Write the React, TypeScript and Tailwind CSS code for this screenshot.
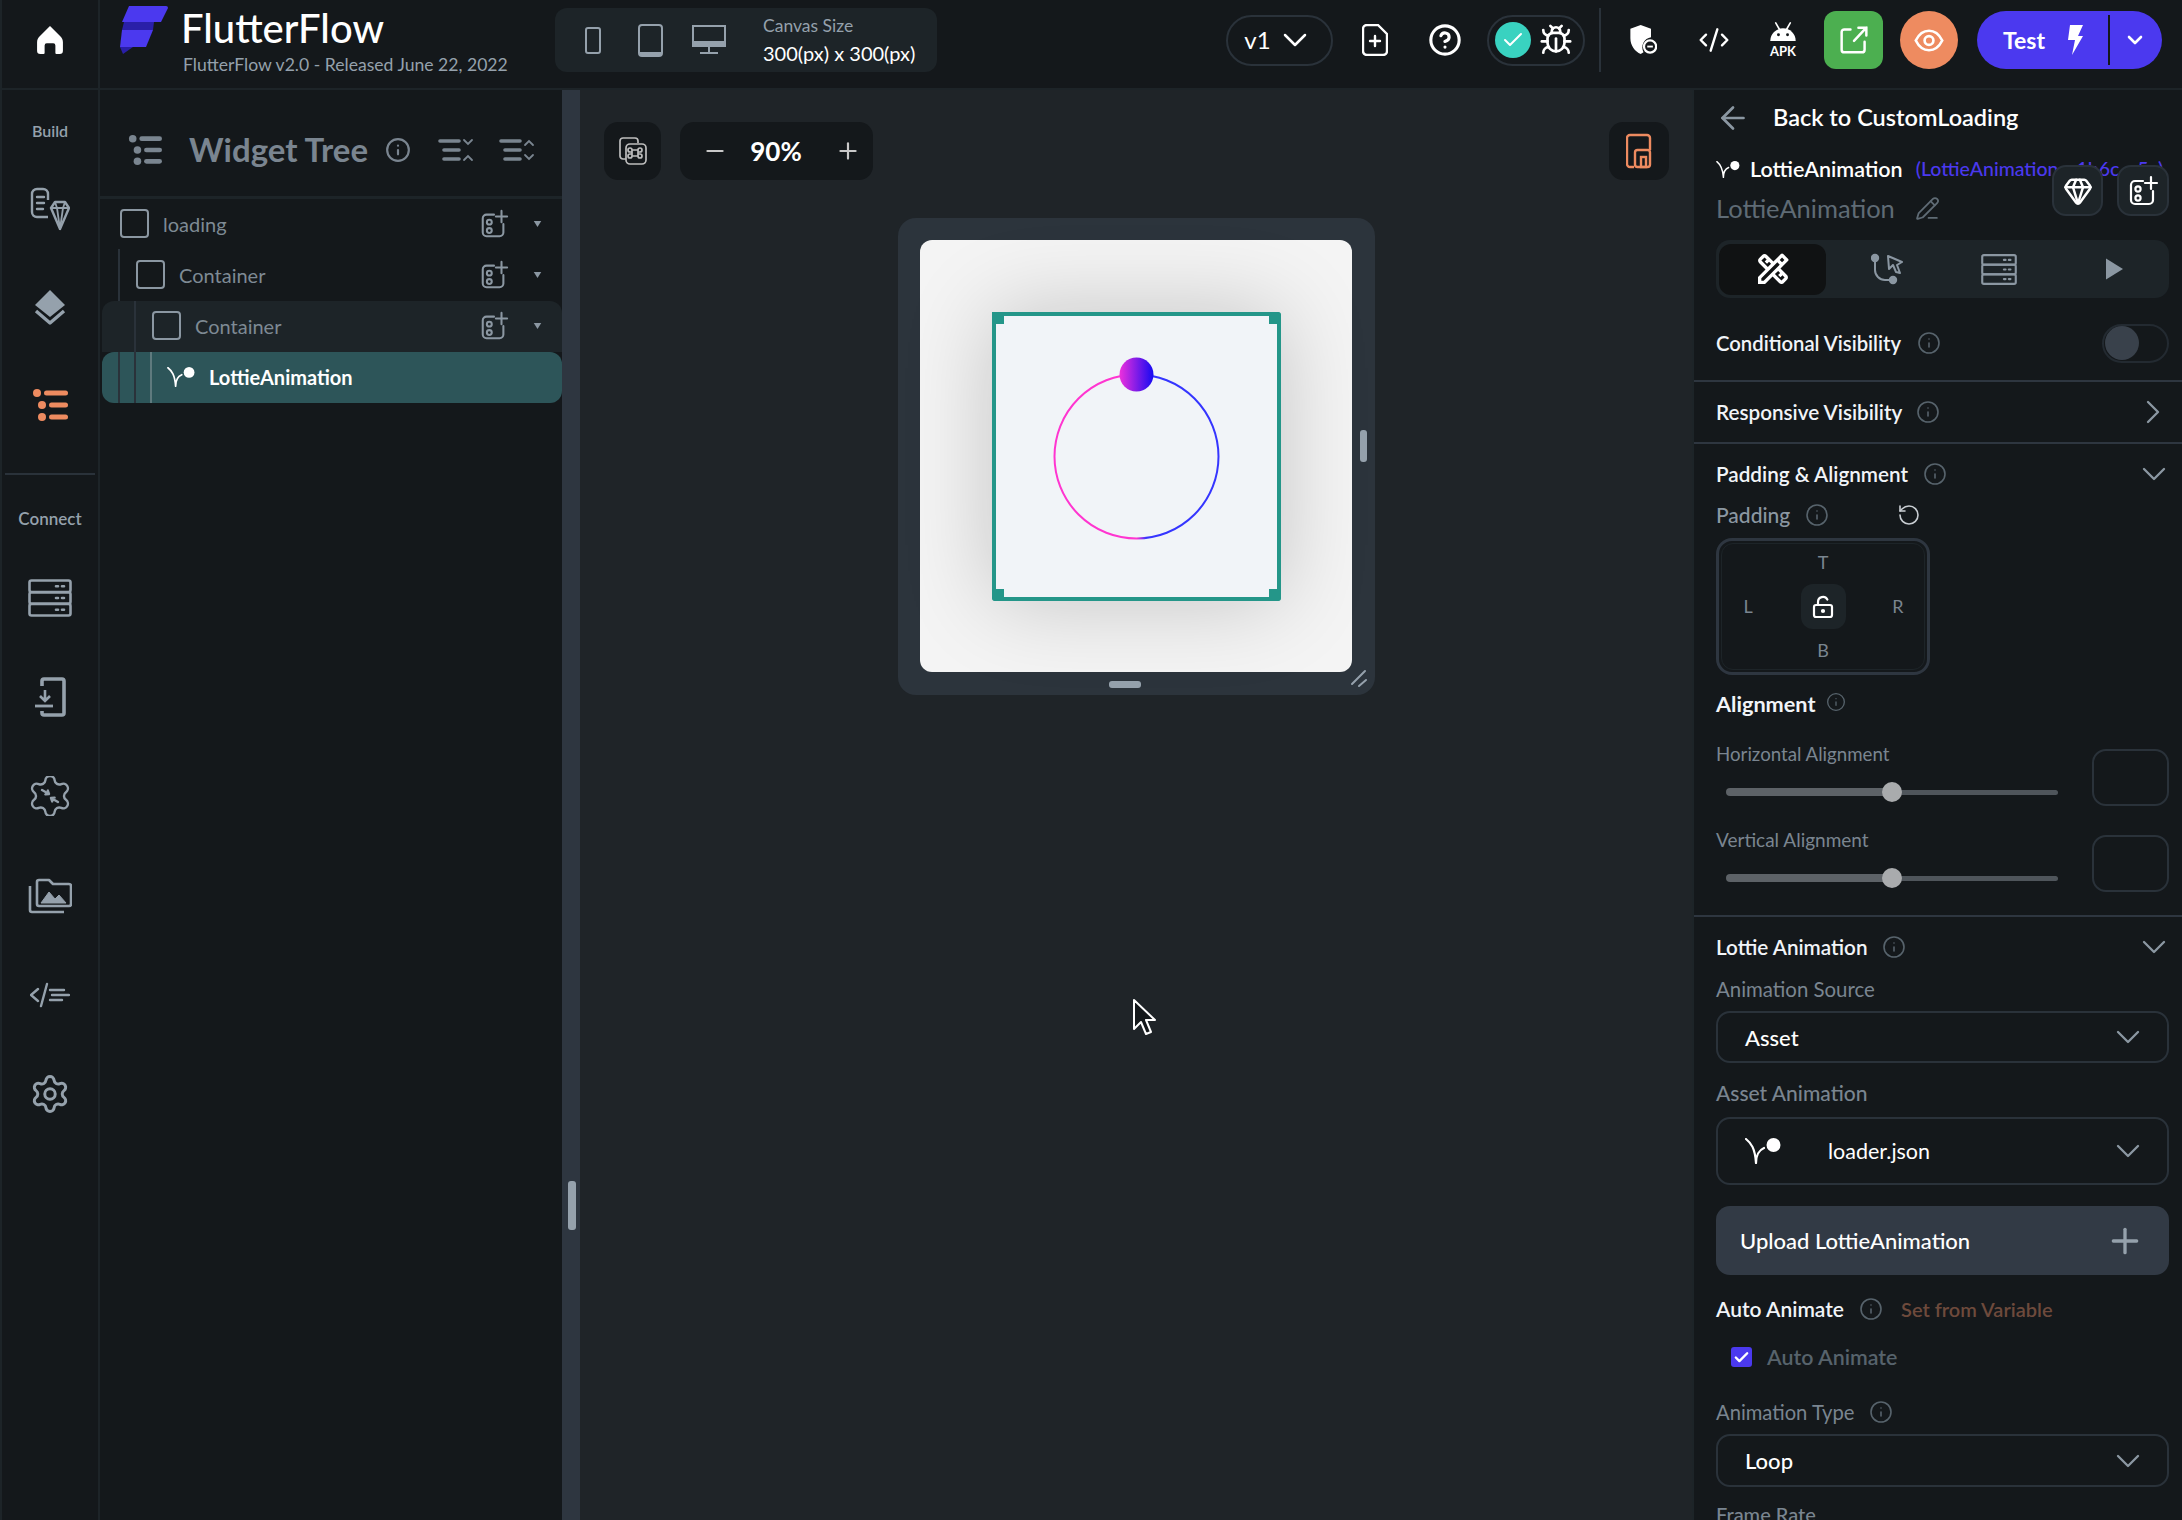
import { ChevronDown, ChevronRight, CircleHelp, Bug, Check, CodeXml, Info, LockKeyholeOpen, PencilLine, Plus, Minus, RotateCcw, ArrowLeft, Gem, Settings } from 'lucide-react';
import { MdOutlineDesignServices } from 'react-icons/md';

const FONT = "font-['Lato','Liberation_Sans',sans-serif]";

function LottieIcon({ className }: { className?: string }) {
    return (
        <svg viewBox="0 0 36 26" className={className} fill="none">
            <path d="M1 1c5 4 9 9 10 24M11 25c0-7 3-13 8-15" stroke="currentColor" strokeWidth="2.2" strokeLinecap="round" />
            <circle cx="28.5" cy="7" r="7" fill="currentColor" />
        </svg>
    );
}

function AddWidgetIcon({ className }: { className?: string }) {
    return (
        <svg viewBox="0 0 32 32" className={className} fill="none" stroke="currentColor" strokeWidth="2.2" strokeLinecap="round">
            <path d="M16 6H8a4 4 0 0 0-4 4v15a4 4 0 0 0 4 4h14a4 4 0 0 0 4-4v-9" />
            <circle cx="11" cy="14" r="2.6" />
            <circle cx="11" cy="23" r="2.6" />
            <path d="M24 2v12M18 8h12" />
        </svg>
    );
}

function DatabaseIcon({ className }: { className?: string }) {
    return (
        <svg viewBox="0 0 44 38" className={className} fill="none" stroke="currentColor" strokeWidth="2.6">
            <rect x="1.5" y="1.5" width="41" height="11.6" rx="2" />
            <rect x="1.5" y="13.2" width="41" height="11.6" rx="2" />
            <rect x="1.5" y="24.9" width="41" height="11.6" rx="2" />
            <path d="M28 7.3h2M34 7.3h2M28 19h2M34 19h2M28 30.7h2M34 30.7h2" strokeLinecap="round" />
        </svg>
    );
}

function TreeListIcon({ className }: { className?: string }) {
    return (
        <svg viewBox="0 0 36 36" className={className} fill="currentColor">
            <circle cx="5" cy="6" r="4" />
            <rect x="12" y="3.5" width="24" height="5" rx="2.5" />
            <circle cx="10" cy="18" r="4" />
            <rect x="17" y="15.5" width="19" height="5" rx="2.5" />
            <circle cx="10" cy="30" r="4" />
            <rect x="17" y="27.5" width="19" height="5" rx="2.5" />
        </svg>
    );
}

function CollapseIcon({ up, className }: { up?: boolean; className?: string }) {
    return (
        <svg viewBox="0 0 36 26" className={className} fill="none" stroke="currentColor" strokeLinecap="round">
            <path d="M2 4h19M6 13h15M6 22h15" strokeWidth="3.6" />
            {up ? <path d="M26 8l4-4 4 4M26 18l4 4 4-4" strokeWidth="1.8" /> : <path d="M26 3l4 4 4-4M26 23l4-4 4 4" strokeWidth="1.8" />}
        </svg>
    );
}

function RowCheck({ className }: { className?: string }) {
    return <div className={`rounded-[4px] border-2 border-[#8b97a2] ${className ?? ''}`} />;
}

type TreeRowProps = { label: string; depth: number; highlight?: boolean };

function TreeRow({ label, depth, highlight }: TreeRowProps) {
    const pad = ['pl-[20px]', 'pl-[36px]', 'pl-[50px]'][depth];
    return (
        <div className={`relative flex h-[51px] items-center pb-[2px] pr-[20px] ${pad} ${highlight ? 'rounded-t-[12px] bg-[#1d2428]' : ''}`}>
            <RowCheck className="h-[29px] w-[29px] shrink-0" />
            <span className="ml-[14px] flex-1 text-[20px] text-[#7e8a94]">{label}</span>
            <AddWidgetIcon className="h-[30px] w-[30px] text-[#8b97a2]" />
            <svg viewBox="0 0 10 8" className="ml-[24px] h-[6px] w-[9px] text-[#8b97a2]" fill="currentColor">
                <path d="M0 0h10L5 8z" />
            </svg>
        </div>
    );
}

function InfoDot({ className }: { className?: string }) {
    return <Info className={`h-[24px] w-[24px] shrink-0 text-[#57636c] ${className ?? ''}`} strokeWidth={1.6} />;
}

function SectionHead({ title, gap, chevron, size }: { title: string; gap: string; chevron: 'down' | 'right'; size: string }) {
    return (
        <div className="flex h-full items-center">
            <span className={`font-semibold leading-none text-[#f1f4f8] ${size}`}>{title}</span>
            <InfoDot className={gap} />
            {chevron === 'down' && <ChevronDown className="-mr-[5px] ml-auto h-[40px] w-[40px] text-[#8b97a2]" strokeWidth={1.4} />}
            {chevron === 'right' && <ChevronRight className="-mr-[4px] ml-auto h-[40px] w-[40px] text-[#8b97a2]" strokeWidth={1.4} />}
        </div>
    );
}

function SliderRow({ label, size }: { label: string; size: string }) {
    return (
        <div className="flex h-[86px] items-start">
            <div className="w-[376px]">
                <div className={`h-[22px] leading-[22px] text-[#7a8590] ${size}`}>{label}</div>
                <div className="relative ml-[10px] mt-[17px] flex h-[20px] w-[332px] items-center">
                    <div className="h-[8px] w-[166px] rounded-l-full bg-[#5d6267]" />
                    <div className="h-[5px] flex-1 rounded-r-full bg-[#4f555b]" />
                    <div className="absolute left-[156px] top-0 h-[20px] w-[20px] rounded-full bg-[#a9abad]" />
                </div>
            </div>
            <div className="ml-auto mt-[6px] h-[57px] w-[77px] rounded-[14px] border-2 border-[#2a323a]" />
        </div>
    );
}

function SelectBox({ children, height }: { children: React.ReactNode; height: string }) {
    return (
        <div className={`flex items-center rounded-[14px] border-2 border-[#2a323a] pl-[27px] pr-[19px] ${height}`}>
            {children}
            <ChevronDown className="ml-auto h-[40px] w-[40px] text-[#8b97a2]" strokeWidth={1.4} />
        </div>
    );
}

function Rail() {
    return (
        <aside className="flex w-[100px] shrink-0 flex-col items-center border-l-2 border-r-2 border-[#1d2428] bg-[#14181b] text-[#95a1ac]">
            <div className="mt-[30px] h-[22px] text-[16px] font-semibold leading-[22px]">Build</div>
            <div className="mt-[18px] flex h-[98px] items-center">
                <svg viewBox="0 0 40 44" className="h-[44px] w-[40px]" fill="none" stroke="currentColor" strokeWidth="2.4" strokeLinejoin="round">
                    <path d="M18 30H7a5 5 0 0 1-5-5V7a5 5 0 0 1 5-5h6a5 5 0 0 1 5 5v6" />
                    <path d="M7 10h7M7 16h7M7 22h6" strokeLinecap="round" />
                    <path d="M21 21l4-6h10l4 6-9 21z" fill="#14181b" />
                    <path d="M21 21h18M27 21l3 21 3-21M25 15l2 6M35 15l-2 6" strokeWidth="1.8" />
                </svg>
            </div>
            <div className="flex h-[98px] items-center">
                <svg viewBox="0 0 36 36" className="h-[36px] w-[36px]" fill="none">
                    <path d="M18 1l15 15-15 12L3 16z" fill="currentColor" />
                    <path d="M4 22l14 12 14-12" stroke="currentColor" strokeWidth="3.4" strokeLinejoin="round" />
                </svg>
            </div>
            <div className="flex h-[98px] items-center text-[#ee8b60]">
                <TreeListIcon className="h-[36px] w-[36px]" />
            </div>
            <div className="mt-[19px] h-[2px] w-[90px] bg-[#2a323a]" />
            <div className="mt-[33px] h-[22px] text-[17px] font-semibold leading-[22px]">Connect</div>
            <div className="mt-[18px] flex h-[99px] items-center">
                <DatabaseIcon className="h-[38px] w-[44px]" />
            </div>
            <div className="flex h-[99px] items-center">
                <svg viewBox="0 0 32 40" className="h-[40px] w-[32px]" fill="none" stroke="currentColor" strokeWidth="3.6">
                    <path d="M8 9V4a2 2 0 0 1 2-2h18a2 2 0 0 1 2 2v32a2 2 0 0 1-2 2H10a2 2 0 0 1-2-2v-2" />
                    <path d="M11 13v11M6 19l5 5 5-5" strokeWidth="2.6" />
                    <path d="M1 29h18" strokeWidth="2.8" />
                </svg>
            </div>
            <div className="flex h-[100px] items-center">
                <svg viewBox="2 2 20 20" className="h-[40px] w-[40px]" fill="none" stroke="currentColor" strokeWidth="1.2" strokeLinecap="round">
                    <path d="M9.671 4.136a2.34 2.34 0 0 1 4.659 0 2.34 2.34 0 0 0 3.319 1.915 2.34 2.34 0 0 1 2.33 4.033 2.34 2.34 0 0 0 0 3.831 2.34 2.34 0 0 1-2.33 4.033 2.34 2.34 0 0 0-3.319 1.915 2.34 2.34 0 0 1-4.659 0 2.34 2.34 0 0 0-3.32-1.915 2.34 2.34 0 0 1-2.33-4.033 2.34 2.34 0 0 0 0-3.831A2.34 2.34 0 0 1 6.35 6.051a2.34 2.34 0 0 0 3.319-1.915" />
                    <path d="M8 9l3.5 2M11.5 11l-1.8.2M11.5 11l-.6-1.7M16 15l-3.5-2M12.5 13l1.8-.2M12.5 13l.6 1.7" />
                </svg>
            </div>
            <div className="flex h-[99px] items-center">
                <svg viewBox="0 0 44 36" className="h-[36px] w-[44px]" fill="none" stroke="currentColor" strokeWidth="2.6" strokeLinejoin="round">
                    <path d="M2 8v24a2 2 0 0 0 2 2h32" />
                    <path d="M9 4a2 2 0 0 1 2-2h10l4 4h16a2 2 0 0 1 2 2v18a2 2 0 0 1-2 2H11a2 2 0 0 1-2-2z" />
                    <path d="M13 25l8-11 6 7 4-4 7 8z" fill="currentColor" strokeWidth="1" />
                </svg>
            </div>
            <div className="flex h-[99px] items-center">
                <svg viewBox="0 0 40 24" className="h-[28px] w-[40px]" fill="none" stroke="currentColor" strokeWidth="2.4" strokeLinecap="round">
                    <path d="M8 6l-7 6 7 6M17 1l-6 22M20 7h14M22 12h17M20 17h12" />
                </svg>
            </div>
            <div className="flex h-[99px] items-center">
                <Settings className="h-[42px] w-[42px]" strokeWidth={1.7} />
            </div>
        </aside>
    );
}

function TopBar() {
    return (
        <header className="flex h-[90px] shrink-0 items-center border-b-2 border-[#1d2428] bg-[#14181b] pb-[8px]">
            <div className="flex h-[88px] w-[100px] shrink-0 items-center justify-center self-start border-l-2 border-r-2 border-[#1d2428] pb-[8px]">
                <svg viewBox="0 0 24 26" className="h-[28px] w-[26px] text-white" fill="currentColor">
                    <path d="M12 0l10 10c1 1 2 3 2 5v8a3 3 0 0 1-3 3h-3a1 1 0 0 1-1-1v-7a2 2 0 0 0-2-2h-6a2 2 0 0 0-2 2v7a1 1 0 0 1-1 1H3a3 3 0 0 1-3-3v-8c0-2 1-4 2-5z" />
                </svg>
            </div>
            <svg viewBox="0 0 48 48" className="ml-[20px] mt-[6px] h-[48px] w-[48px] shrink-0 self-start">
                <path d="M9 0h37a2 2 0 0 1 2 2l-7 14H2z" fill="#4b39ef" />
                <path d="M4 16h30l-1 8H2z" fill="#2a1fa8" />
                <path d="M2 24h31l-7 17H0z" fill="#4b39ef" />
                <path d="M0 41h13L3 48z" fill="#2a1fa8" />
            </svg>
            <div className="ml-[13px] mt-[6px] flex w-[374px] shrink-0 flex-col self-start">
                <span className="h-[44px] text-[40px] font-medium leading-[44px] text-white">FlutterFlow</span>
                <span className="ml-[2px] mt-[4px] text-[17.6px] leading-[22px] text-[#95a1ac]">FlutterFlow v2.0 - Released June 22, 2022</span>
            </div>
            <div className="flex h-[64px] w-[382px] shrink-0 items-center rounded-[12px] bg-[#1d2428] text-[#95a1ac]">
                <div className="ml-[30px] h-[27px] w-[16px] rounded-[3px] border-2 border-[#95a1ac]" />
                <div className="ml-[37px] h-[33px] w-[25px] rounded-[4px] border-2 border-b-[5px] border-[#95a1ac]" />
                <svg viewBox="0 0 34 30" className="ml-[29px] h-[30px] w-[34px]" fill="none" stroke="currentColor" strokeWidth="2">
                    <path d="M1 1h32v20H1z" />
                    <path d="M1 18h32" strokeWidth="4" />
                    <path d="M17 21v6M8 28h18" />
                </svg>
                <div className="ml-[37px] flex flex-col">
                    <span className="-mt-[1px] text-[17.5px] leading-[22px]">Canvas Size</span>
                    <span className="mt-[4px] text-[20px] leading-[24px] text-white">300(px) x 300(px)</span>
                </div>
            </div>
            <div className="ml-[289px] flex h-[51px] w-[107px] shrink-0 items-center justify-center gap-[4px] rounded-full border-2 border-[#2a323a] text-white">
                <span className="text-[24px]">v1</span>
                <ChevronDown className="h-[40px] w-[40px]" strokeWidth={1.5} />
            </div>
            <svg viewBox="0 0 26 32" className="ml-[29px] h-[32px] w-[26px] text-white" fill="none" stroke="currentColor" strokeWidth="2.4" strokeLinejoin="round">
                <path d="M5 1h11l9 9v17a4 4 0 0 1-4 4H5a4 4 0 0 1-4-4V5a4 4 0 0 1 4-4z" />
                <path d="M13 12v10M8 17h10" strokeLinecap="round" />
            </svg>
            <CircleHelp className="ml-[40px] h-[34px] w-[34px] text-white" strokeWidth={2.2} />
            <div className="ml-[25px] flex h-[51px] w-[98px] items-center rounded-full border-2 border-[#2a323a] pl-[6px]">
                <div className="flex h-[36px] w-[36px] items-center justify-center rounded-full bg-[#39d2c0]">
                    <Check className="h-[24px] w-[24px] text-white" strokeWidth={2} />
                </div>
                <Bug className="ml-[8px] h-[34px] w-[34px] text-white" strokeWidth={1.9} />
            </div>
            <div className="ml-[14px] h-[64px] w-[2px] bg-[#2a323a]" />
            <svg viewBox="0 0 28 32" className="ml-[29px] h-[30px] w-[27px] text-white">
                <path d="M11 0l11 4v9a11 11 0 0 0-8 16l-3 2C5 28 0 22 0 14V4z" fill="currentColor" />
                <circle cx="21" cy="23" r="6.5" fill="none" stroke="currentColor" strokeWidth="2.4" />
                <path d="M18 23h6" stroke="currentColor" strokeWidth="2" />
            </svg>
            <CodeXml className="ml-[41px] h-[32px] w-[32px] text-white" strokeWidth={1.8} />
            <div className="ml-[37px] flex w-[32px] flex-col items-center text-white">
                <svg viewBox="0 0 30 22" className="h-[20px] w-[28px]" fill="currentColor">
                    <path d="M1 21a14 14 0 0 1 28 0z" />
                    <path d="M7 1l4 7M23 1l-4 7" stroke="currentColor" strokeWidth="1.8" strokeLinecap="round" />
                    <circle cx="10" cy="14" r="1.6" fill="#14181b" />
                    <circle cx="20" cy="14" r="1.6" fill="#14181b" />
                </svg>
                <span className="mt-[2px] text-[13px] font-bold leading-[14px]">APK</span>
            </div>
            <div className="ml-[25px] flex h-[58px] w-[59px] items-center justify-center rounded-[12px] bg-[#4caf50]">
                <svg viewBox="0 0 34 34" className="h-[30px] w-[30px] text-white" fill="none" stroke="currentColor" strokeWidth="2.8" strokeLinecap="round">
                    <path d="M13 5H6a3 3 0 0 0-3 3v20a3 3 0 0 0 3 3h20a3 3 0 0 0 3-3v-9" />
                    <path d="M17 18L31 3M22 3h9v9" />
                </svg>
            </div>
            <div className="ml-[17px] flex h-[58px] w-[58px] items-center justify-center rounded-full bg-[#ee8b60]">
                <svg viewBox="0 0 34 26" className="h-[23px] w-[30px] text-white" fill="none" stroke="currentColor" strokeWidth="3">
                    <path d="M2 13C6 5 11 2 17 2s11 3 15 11c-4 8-9 11-15 11S6 21 2 13z" />
                    <circle cx="17" cy="13" r="5" />
                </svg>
            </div>
            <div className="ml-[19px] flex h-[58px] w-[185px] items-center rounded-full bg-[#4b39ef] text-white">
                <span className="ml-[26px] text-[23px] font-bold">Test</span>
                <svg viewBox="0 0 16 30" className="ml-[22px] h-[30px] w-[16px]" fill="currentColor">
                    <path d="M3 0h13l-5 11h5L5 30l3-15H1z" />
                </svg>
                <div className="ml-[25px] h-[50px] w-[2px] bg-[#14181b]" />
                <ChevronDown className="ml-[13px] h-[24px] w-[24px]" strokeWidth={2.6} />
            </div>
        </header>
    );
}

function TreePanel() {
    return (
        <section className="flex w-[480px] shrink-0 bg-[#14181b]">
            <div className="flex w-[462px] flex-col">
                <div className="flex h-[109px] items-center border-b-[3px] border-[#1d2428] pt-[14px] text-[#7a8590]">
                    <TreeListIcon className="ml-[28px] h-[34px] w-[34px]" />
                    <span className="ml-[27px] text-[33px] font-bold">Widget Tree</span>
                    <Info className="ml-[17px] h-[26px] w-[26px]" strokeWidth={2} />
                    <CollapseIcon className="ml-[27px] h-[26px] w-[36px]" />
                    <CollapseIcon up className="ml-[25px] h-[26px] w-[36px]" />
                </div>
                <div className="relative flex-1">
                    <div className="absolute left-[18px] top-[50px] h-[154px] w-[2px] bg-[#2a323a]" />
                    <div className="absolute left-[34px] top-[102px] z-10 h-[102px] w-[2px] bg-[#2a323a]" />
                    <div className="absolute left-[50px] top-[153px] z-10 h-[51px] w-[2px] bg-[#5f7a7e]" />
                    <TreeRow label="loading" depth={0} />
                    <TreeRow label="Container" depth={1} />
                    <div className="ml-[2px]">
                        <TreeRow label="Container" depth={2} highlight />
                    </div>
                    <div className="ml-[2px] flex h-[51px] items-center rounded-[12px] bg-[#2d5559] pb-[1px] pl-[65px]">
                        <LottieIcon className="h-[20px] w-[28px] text-white" />
                        <span className="ml-[14px] text-[20px] font-bold text-white">LottieAnimation</span>
                    </div>
                </div>
            </div>
            <div className="relative w-[18px] bg-[#2e3640]">
                <div className="absolute left-[6px] top-[1091px] h-[49px] w-[8px] rounded-[3px] bg-[#95a1ac]" />
            </div>
        </section>
    );
}

function Canvas() {
    return (
        <main className="relative flex-1 bg-[#1f2428]">
            <div className="flex items-start pl-[24px] pr-[23px] pt-[32px]">
                <div className="flex h-[58px] w-[57px] items-center justify-center rounded-[14px] bg-[#14181b]">
                    <svg viewBox="0 0 30 30" className="h-[30px] w-[30px] text-[#bdbdbd]" fill="none" stroke="currentColor" strokeWidth="1.7">
                        <path d="M8 23H5a3 3 0 0 1-3-3V5a3 3 0 0 1 3-3h12a3 3 0 0 1 3 3v2" />
                        <rect x="8" y="8" width="20" height="20" rx="4" />
                        <path d="M14 14h6v6h-6zM14 14a2 2 0 1 0-2 2h2M20 14a2 2 0 1 1 2 2h-2M14 20a2 2 0 1 1-2-2h2M20 20a2 2 0 1 0 2-2h-2" />
                    </svg>
                </div>
                <div className="ml-[19px] flex h-[58px] w-[193px] items-center rounded-[14px] bg-[#14181b]">
                    <Minus className="ml-[22px] h-[26px] w-[26px] text-[#c9c9c9]" strokeWidth={2} />
                    <span className="ml-[18px] w-[60px] text-center text-[26px] font-bold text-white">90%</span>
                    <Plus className="ml-[29px] h-[26px] w-[26px] text-[#c9c9c9]" strokeWidth={2} />
                </div>
                <div className="ml-auto flex h-[58px] w-[60px] items-center justify-center rounded-[14px] bg-[#14181b]">
                    <svg viewBox="0 0 26 36" className="h-[36px] w-[26px] text-[#ee8b60]" fill="none" stroke="currentColor" strokeWidth="2.4">
                        <path d="M8 34H4a3 3 0 0 1-3-3V5a3 3 0 0 1 3-3h17a3 3 0 0 1 3 3v12" />
                        <rect x="9" y="17" width="15" height="17" rx="2.5" />
                        <rect x="15" y="24" width="5" height="10" />
                    </svg>
                </div>
            </div>
            {/* device frame */}
            <div className="relative ml-[318px] mt-[38px] h-[477px] w-[477px] rounded-[18px] bg-[#2c343c] p-[22px]">
                <div className="flex h-[432px] w-[432px] items-center justify-center rounded-[12px] bg-[#f4f4f4]">
                    <div className="relative flex h-[289px] w-[289px] items-center justify-center rounded-[3px] border-[4px] border-[#249689] bg-[#f1f4f8] shadow-[0_0_90px_rgba(0,0,0,0.2)]">
                        <div className="absolute -left-[4px] -top-[4px] h-[12px] w-[12px] bg-[#249689]" />
                        <div className="absolute -right-[4px] -top-[4px] h-[12px] w-[12px] rounded-tr-[4px] bg-[#249689]" />
                        <div className="absolute -bottom-[4px] -left-[4px] h-[12px] w-[12px] rounded-bl-[4px] bg-[#249689]" />
                        <div className="absolute -bottom-[4px] -right-[4px] h-[12px] w-[12px] rounded-br-[4px] bg-[#249689]" />
                        <svg viewBox="0 0 200 200" className="h-[200px] w-[200px]" fill="none">
                            <defs>
                                <linearGradient id="ring" x1="0" y1="0" x2="1" y2="0">
                                    <stop offset="0.5" stopColor="#ff35d0" />
                                    <stop offset="0.56" stopColor="#3535ff" />
                                </linearGradient>
                                <linearGradient id="ball" x1="0" y1="0" x2="1" y2="0">
                                    <stop offset="0" stopColor="#ee30dc" />
                                    <stop offset="1" stopColor="#1509f2" />
                                </linearGradient>
                            </defs>
                            <circle cx="100.5" cy="100.5" r="82" stroke="url(#ring)" strokeWidth="2" />
                            <circle cx="100.5" cy="18.5" r="17" fill="url(#ball)" />
                        </svg>
                    </div>
                </div>
                <div className="absolute left-[462px] top-[212px] h-[32px] w-[7px] rounded-[3px] bg-[#95a1ac]" />
                <div className="absolute left-[211px] top-[463px] h-[7px] w-[32px] rounded-[3px] bg-[#95a1ac]" />
                <svg viewBox="0 0 20 20" className="absolute left-[452px] top-[451px] h-[20px] w-[20px] text-[#95a1ac]" stroke="currentColor" strokeWidth="2" strokeLinecap="round">
                    <path d="M2 15L15 2M9 17l7-6" />
                </svg>
            </div>
            {/* mouse pointer */}
            <svg viewBox="0 0 24 38" className="absolute left-[552px] top-[908px] h-[38px] w-[24px]">
                <path d="M2 2v29l7-7 5 12 5-2-5-12h9z" fill="#14181b" stroke="#ffffff" strokeWidth="2" strokeLinejoin="round" />
            </svg>
        </main>
    );
}

function PropertiesPanel() {
    return (
        <aside className="h-full w-[490px] shrink-0 overflow-hidden border-l-2 border-[#1d2428] bg-[#14181b]">
            <div className="pl-[22px] pr-[13px]">
                <div className="flex h-[56px] items-center">
                    <ArrowLeft className="-ml-[1px] h-[36px] w-[36px] text-[#8b97a2]" strokeWidth={1.8} />
                    <span className="ml-[22px] text-[23.5px] font-semibold text-white">Back to CustomLoading</span>
                </div>
                <div className="relative mt-[9px] flex h-[28px] items-center whitespace-nowrap">
                    <LottieIcon className="h-[17px] w-[24px] text-white" />
                    <span className="ml-[10px] text-[21.5px] font-semibold text-white">LottieAnimation</span>
                    <span className="ml-[13px] text-[19.5px] font-medium text-[#4b39ef]">(LottieAnimation__1h6c__5a)</span>
                    <div className="absolute left-[336px] top-[10px] flex h-[51px] w-[51px] items-center justify-center rounded-[14px] border-2 border-[#2a323a] bg-[#1d2428]">
                        <Gem className="h-[30px] w-[30px] text-white" strokeWidth={2} />
                    </div>
                    <div className="absolute left-[401px] top-[10px] flex h-[51px] w-[52px] items-center justify-center rounded-[14px] border-2 border-[#2a323a] bg-[#1d2428]">
                        <AddWidgetIcon className="h-[32px] w-[32px] text-white" />
                    </div>
                </div>
                <div className="mt-[9px] flex h-[32px] items-center">
                    <span className="text-[25.5px] text-[#5f6b75]">LottieAnimation</span>
                    <PencilLine className="ml-[20px] h-[25px] w-[25px] text-[#5f6b75]" strokeWidth={1.7} />
                </div>
                <div className="mt-[16px] flex h-[58px] items-center rounded-[14px] bg-[#1d2428] pl-[3px]">
                    <div className="flex h-[51px] w-[107px] items-center justify-center rounded-[12px] bg-[#101213]">
                        <MdOutlineDesignServices className="h-[40px] w-[40px] text-white" />
                    </div>
                    <div className="flex w-[122px] justify-center text-[#8b97a2]">
                        <svg viewBox="0 0 32 32" className="h-[32px] w-[32px]" fill="none" stroke="currentColor" strokeWidth="2">
                            <circle cx="4" cy="5" r="3.2" fill="currentColor" />
                            <circle cx="22" cy="27" r="3.2" fill="currentColor" />
                            <path d="M4 8v9a10 10 0 0 0 10 10h6" />
                            <path d="M17 3l14 6-5 3 3 8-4-1-3-7-4 4z" strokeLinejoin="round" />
                        </svg>
                    </div>
                    <div className="flex w-[102px] justify-center text-[#8b97a2]">
                        <DatabaseIcon className="h-[33px] w-[36px]" />
                    </div>
                    <div className="flex flex-1 justify-center pl-[10px] text-[#8b97a2]">
                        <svg viewBox="0 0 18 22" className="h-[22px] w-[17px]" fill="currentColor">
                            <path d="M0 0l18 11L0 22z" />
                        </svg>
                    </div>
                </div>
                <div className="flex h-[82px] items-center pt-[8px]">
                    <span className="text-[20.3px] font-semibold text-[#f1f4f8]">Conditional Visibility</span>
                    <InfoDot className="ml-[16px]" />
                    <div className="ml-auto flex h-[39px] w-[67px] items-center rounded-full border-2 border-[#232a31] pl-[1px]">
                        <div className="h-[34px] w-[34px] rounded-full bg-[#39414b]" />
                    </div>
                </div>
            </div>
            <div className="h-[64px] border-y-2 border-[#2e3640] pl-[22px] pr-[13px]">
                <SectionHead title="Responsive Visibility" gap="ml-[14px]" chevron="right" size="text-[20.7px]" />
            </div>
            <div className="border-b-2 border-[#2e3640] pl-[22px] pr-[13px]">
                <div className="h-[60px]">
                    <SectionHead title="Padding & Alignment" gap="ml-[15px]" chevron="down" size="text-[20.7px]" />
                </div>
                <div className="flex h-[22px] items-center">
                    <span className="text-[21px] font-medium text-[#8b97a2]">Padding</span>
                    <InfoDot className="ml-[15px]" />
                    <RotateCcw className="ml-[68px] h-[24px] w-[24px] text-[#c9ced3]" strokeWidth={1.6} />
                </div>
                <div className="mt-[12px] h-[137px] w-[214px] rounded-[16px] border-[3px] border-[#2e3640] p-[2px]">
                    <div className="grid h-full grid-cols-[45px_45px_45px] grid-rows-[44px_44px_44px] place-content-center place-items-center gap-x-[30px] rounded-[12px] border border-[#1d2428] text-[18px] text-[#7a8590]">
                        <span className="col-start-2">T</span>
                        <span className="col-start-1 row-start-2">L</span>
                        <div className="col-start-2 row-start-2 flex h-[45px] w-[45px] items-center justify-center rounded-[12px] bg-[#1d2428]">
                            <LockKeyholeOpen className="h-[24px] w-[24px] text-white" strokeWidth={2.2} />
                        </div>
                        <span className="col-start-3 row-start-2">R</span>
                        <span className="col-start-2 row-start-3">B</span>
                    </div>
                </div>
                <div className="mt-[17px] flex h-[24px] items-center">
                    <span className="text-[21.7px] font-bold text-[#f1f4f8]">Alignment</span>
                    <Info className="-mt-[4px] ml-[10px] h-[20px] w-[20px] text-[#57636c]" strokeWidth={1.6} />
                </div>
                <div className="mt-[27px]">
                    <SliderRow label="Horizontal Alignment" size="text-[18.7px]" />
                    <SliderRow label="Vertical Alignment" size="text-[19px]" />
                </div>
            </div>
            <div className="pl-[22px] pr-[13px]">
                <div className="h-[60px]">
                    <SectionHead title="Lottie Animation" gap="ml-[14px]" chevron="down" size="text-[20.7px]" />
                </div>
                <div className="mt-[1px] h-[22px] text-[20.4px] leading-[22px] text-[#7a8590]">Animation Source</div>
                <div className="mt-[11px]">
                    <SelectBox height="h-[52px]">
                        <span className="text-[22px] font-medium text-white">Asset</span>
                    </SelectBox>
                </div>
                <div className="mt-[19px] h-[22px] text-[21px] font-medium leading-[22px] text-[#7a8590]">Asset Animation</div>
                <div className="mt-[13px]">
                    <SelectBox height="h-[68px]">
                        <LottieIcon className="h-[26px] w-[36px] text-white" />
                        <span className="ml-[47px] text-[21.5px] text-white">loader.json</span>
                    </SelectBox>
                </div>
                <div className="mt-[21px] flex h-[69px] items-center rounded-[14px] bg-[#323a45] pl-[24px] pr-[24px]">
                    <span className="text-[22px] font-medium text-white">Upload LottieAnimation</span>
                    <Plus className="ml-auto h-[40px] w-[40px] text-[#95a1ac]" strokeWidth={2} />
                </div>
                <div className="mt-[22px] flex h-[24px] items-center">
                    <span className="text-[21px] font-semibold text-[#f1f4f8]">Auto Animate</span>
                    <InfoDot className="ml-[15px]" />
                    <span className="ml-[18px] text-[20px] font-semibold text-[#6e4a3c]">Set from Variable</span>
                </div>
                <div className="mt-[24px] flex h-[24px] items-center pl-[15px]">
                    <div className="flex h-[20px] w-[21px] items-center justify-center rounded-[3px] bg-[#4b39ef]">
                        <Check className="h-[17px] w-[17px] text-white" strokeWidth={3.4} />
                    </div>
                    <span className="ml-[15px] text-[21.4px] font-semibold text-[#57636c]">Auto Animate</span>
                </div>
                <div className="mt-[32px] flex h-[22px] items-center">
                    <span className="text-[20.2px] text-[#7a8590]">Animation Type</span>
                    <InfoDot className="ml-[14px]" />
                </div>
                <div className="mt-[11px]">
                    <SelectBox height="h-[53px]">
                        <span className="text-[22px] font-medium text-white">Loop</span>
                    </SelectBox>
                </div>
                <div className="mt-[16px] h-[22px] text-[20px] font-medium leading-[22px] text-[#7a8590]">Frame Rate</div>
            </div>
        </aside>
    );
}

export default function App() {
    return (
        <div className={`flex h-[1520px] w-[2182px] flex-col overflow-hidden bg-[#14181b] ${FONT}`}>
            <TopBar />
            <div className="flex min-h-0 flex-1">
                <Rail />
                <TreePanel />
                <Canvas />
                <PropertiesPanel />
            </div>
        </div>
    );
}
